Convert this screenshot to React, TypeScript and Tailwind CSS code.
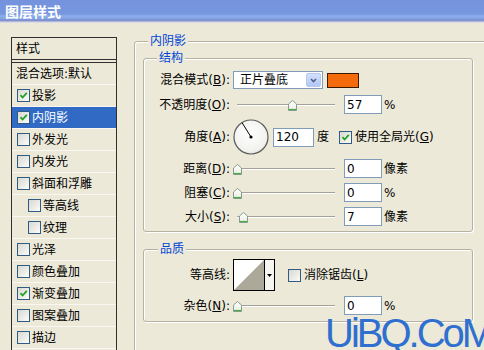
import React from "react";

type StyleItem = {
  name: string;
  box?: boolean;
  checked?: boolean;
  selected?: boolean;
  indent?: boolean;
};

const styleItems: StyleItem[] = [
  { name: "混合选项:默认", box: false },
  { name: "投影", box: true, checked: true },
  { name: "内阴影", box: true, checked: true, selected: true },
  { name: "外发光", box: true },
  { name: "内发光", box: true },
  { name: "斜面和浮雕", box: true },
  { name: "等高线", box: true, indent: true },
  { name: "纹理", box: true, indent: true },
  { name: "光泽", box: true },
  { name: "颜色叠加", box: true },
  { name: "渐变叠加", box: true, checked: true },
  { name: "图案叠加", box: true },
  { name: "描边", box: true },
];

const CheckBox = ({ checked }: { checked?: boolean }) => (
  <span className="flex h-[13px] w-[13px] shrink-0 items-center justify-center border border-[#2f5b85] bg-[linear-gradient(135deg,#d9d9d2,#fbfbf8)]">
    {checked && (
      <svg width="9" height="9" viewBox="0 0 9 9">
        <path d="M1.5 4.2 L3.6 6.5 L7.8 1.8" stroke="#21a121" strokeWidth="1.8" fill="none" />
      </svg>
    )}
  </span>
);

const Label = ({ children }: { children: React.ReactNode }) => (
  <div className="w-[86px] shrink-0 text-right whitespace-nowrap">{children}</div>
);

const Key = ({ k }: { k: string }) => <span className="underline">{k}</span>;

const Field = ({ value, width = "w-[38px]" }: { value: string; width?: string }) => (
  <div className={`flex h-[19px] ${width} items-center border border-[#7f9db9] bg-white pl-[2px]`}>
    {value}
  </div>
);

// slider: track 98px wide, thumb centre moves along it
const Slider = ({ pos }: { pos: number }) => (
  <div className="relative ml-[3px] h-[19px] w-[106px] shrink-0">
    <div className="absolute top-[9px] right-[4px] left-[4px] h-[2px] border-t border-b border-t-[#a4a297] border-b-white" />
    <svg
      className="absolute top-[5px]"
      style={{ left: 4 + pos * 98 - 4.5 }}
      width="9"
      height="11"
      viewBox="0 0 9 11"
    >
      <defs>
        <linearGradient id="thumbfill" x1="0" y1="0" x2="0" y2="1">
          <stop offset="0" stopColor="#ffffff" />
          <stop offset="0.7" stopColor="#eef3ea" />
          <stop offset="1" stopColor="#bfe0b5" />
        </linearGradient>
      </defs>
      <polygon points="0.5,4 4.5,0.5 8.5,4 8.5,10.5 0.5,10.5" fill="url(#thumbfill)" stroke="#8a9a90" />
      <line x1="1" y1="9.5" x2="8" y2="9.5" stroke="#3fae3f" />
    </svg>
  </div>
);

const Dial = () => (
  <svg width="36" height="36" viewBox="0 0 36 36" className="ml-[3px] shrink-0">
    <defs>
      <radialGradient id="dialfill" cx="45%" cy="40%" r="65%">
        <stop offset="0" stopColor="#ffffff" />
        <stop offset="0.8" stopColor="#f1f1ee" />
        <stop offset="1" stopColor="#d6d6d0" />
      </radialGradient>
    </defs>
    <circle cx="18" cy="18" r="17" fill="url(#dialfill)" stroke="#5a5a5a" strokeWidth="1.2" />
    <line x1="18" y1="18" x2="9" y2="3.6" stroke="#000" strokeWidth="1" />
    <circle cx="18" cy="18" r="1.6" fill="#000" />
  </svg>
);

const Legend = ({ children, offset }: { children: React.ReactNode; offset: string }) => (
  <legend className={`${offset} bg-[#ece9d8] px-[2px] leading-[16px] text-[#0046d5]`}>{children}</legend>
);

export default function App() {
  return (
    <div className="relative h-[350px] w-[484px] overflow-hidden bg-[#ece9d8] font-['DejaVu_Sans','Noto_Sans_CJK_SC',sans-serif] text-[12px] leading-[16px] text-black">
      {/* title bar */}
      <div className="h-[23px] bg-[linear-gradient(to_bottom,#7593dc_0px,#7696de_14px,#8bafee_16px,#86a6e8_18px,#7a92d4_20px,#8593c8_21px,#dcdce8_22px)] pl-[5px] pt-[2px]">
        <span className="font-['Noto_Sans_CJK_SC',sans-serif] text-[14px] leading-[18px] font-bold text-white">
          图层样式
        </span>
      </div>

      <div className="flex items-start">
        {/* styles list */}
        <div className="mt-[14px] ml-[11px] h-[330px] w-[106px] shrink-0 border-x border-t border-[#303030]">
          <div className="flex h-[22px] items-center border-b border-[#303030] pl-[4px]">样式</div>
          <div className="h-[3px] border-b border-[#303030]" />
          {styleItems.map((item) => (
            <div
              key={item.name}
              className={`flex h-[22px] items-center gap-[2px] border-b border-[#f8f7f1] ${
                item.indent ? "pl-[16px]" : item.box ? "pl-[5px]" : "pl-[4px]"
              } ${item.selected ? "bg-[#316ac5] text-white" : ""}`}
            >
              {item.box && <CheckBox checked={item.checked} />}
              <span>{item.name}</span>
            </div>
          ))}
        </div>

        {/* inner shadow settings */}
        <fieldset className="mt-[10px] ml-[17px] h-[330px] w-[360px] shrink-0 rounded-[3px] border border-[#b5b2a3] pl-[8px] shadow-[inset_1px_1px_0_#fff,1px_1px_0_#fff]">
          <Legend offset="ml-[5px]">内阴影</Legend>

          <fieldset className="mt-[1px] w-[330px] rounded-[3px] border border-[#b5b2a3] pt-[5px] pb-[5px] shadow-[inset_1px_1px_0_#fff,1px_1px_0_#fff]">
            <Legend offset="ml-[13px]">结构</Legend>

            <div className="flex h-[18px] items-center">
              <Label>
                混合模式(<Key k="B" />):
              </Label>
              <div className="ml-[3px] flex h-[18px] w-[90px] items-center border border-[#7f9db9] bg-white">
                <span className="flex-1 pl-[6px]">正片叠底</span>
                <div className="mr-px flex h-[14px] w-[15px] items-center justify-center rounded-[2px] border border-[#b6c9f4] bg-[linear-gradient(to_bottom,#d3e0fd,#b2c6f5)]">
                  <svg width="7" height="5" viewBox="0 0 7 5">
                    <path d="M1 1 L3.5 3.5 L6 1" stroke="#4d6185" strokeWidth="1.6" fill="none" />
                  </svg>
                </div>
              </div>
              <div className="ml-[4px] h-[15px] w-[32px] border border-[#3a1a00] bg-[#f46b0d]" />
            </div>

            <div className="mt-[6px] flex h-[19px] items-center">
              <Label>
                不透明度(<Key k="O" />):
              </Label>
              <Slider pos={0.57} />
              <div className="ml-[5px]">
                <Field value="57" />
              </div>
              <span className="ml-[2px]">%</span>
            </div>

            <div className="mt-[5px] flex h-[36px] items-center">
              <Label>
                角度(<Key k="A" />):
              </Label>
              <Dial />
              <div className="ml-[4px]">
                <Field value="120" width="w-[41px]" />
              </div>
              <span className="ml-[3px]">度</span>
              <span className="ml-[10px]">
                <CheckBox checked />
              </span>
              <span className="ml-[3px]">
                使用全局光(<Key k="G" />)
              </span>
            </div>

            <div className="mt-[4px] flex h-[19px] items-center">
              <Label>
                距离(<Key k="D" />):
              </Label>
              <Slider pos={0} />
              <div className="ml-[5px]">
                <Field value="0" />
              </div>
              <span className="ml-[2px]">像素</span>
            </div>

            <div className="mt-[5px] flex h-[19px] items-center">
              <Label>
                阻塞(<Key k="C" />):
              </Label>
              <Slider pos={0} />
              <div className="ml-[5px]">
                <Field value="0" />
              </div>
              <span className="ml-[2px]">%</span>
            </div>

            <div className="mt-[5px] flex h-[19px] items-center">
              <Label>
                大小(<Key k="S" />):
              </Label>
              <Slider pos={0.065} />
              <div className="ml-[5px]">
                <Field value="7" />
              </div>
              <span className="ml-[2px]">像素</span>
            </div>
          </fieldset>

          <fieldset className="mt-[9px] w-[330px] rounded-[3px] border border-[#b5b2a3] pt-[2px] pb-[6px] shadow-[inset_1px_1px_0_#fff,1px_1px_0_#fff]">
            <Legend offset="ml-[14px]">品质</Legend>

            <div className="flex h-[32px] items-center">
              <Label>等高线:</Label>
              <div className="ml-[3px] flex h-[32px] w-[42px] border border-black bg-white">
                <svg width="30" height="30" viewBox="0 0 30 30" className="shrink-0">
                  <polygon points="0,30 30,0 30,30" fill="#aca99b" />
                </svg>
                <div className="flex flex-1 items-center justify-center border-l border-black bg-[#f6f5f0]">
                  <svg width="5" height="3" viewBox="0 0 5 3">
                    <polygon points="0,0 5,0 2.5,3" fill="#000" />
                  </svg>
                </div>
              </div>
              <span className="ml-[13px]">
                <CheckBox />
              </span>
              <span className="ml-[3px]">
                消除锯齿(<Key k="L" />)
              </span>
            </div>

            <div className="mt-[5px] flex h-[19px] items-center">
              <Label>
                杂色(<Key k="N" />):
              </Label>
              <Slider pos={0} />
              <div className="ml-[5px]">
                <Field value="0" />
              </div>
              <span className="ml-[2px]">%</span>
            </div>
          </fieldset>
        </fieldset>
      </div>

      {/* site watermark */}
      <div className="absolute top-[313px] left-[325px] font-['Liberation_Sans',Arial,sans-serif] text-[40px] leading-none tracking-[-3px] whitespace-nowrap text-[#2e6fcf]">
        UiBQ.CoM
      </div>
    </div>
  );
}
